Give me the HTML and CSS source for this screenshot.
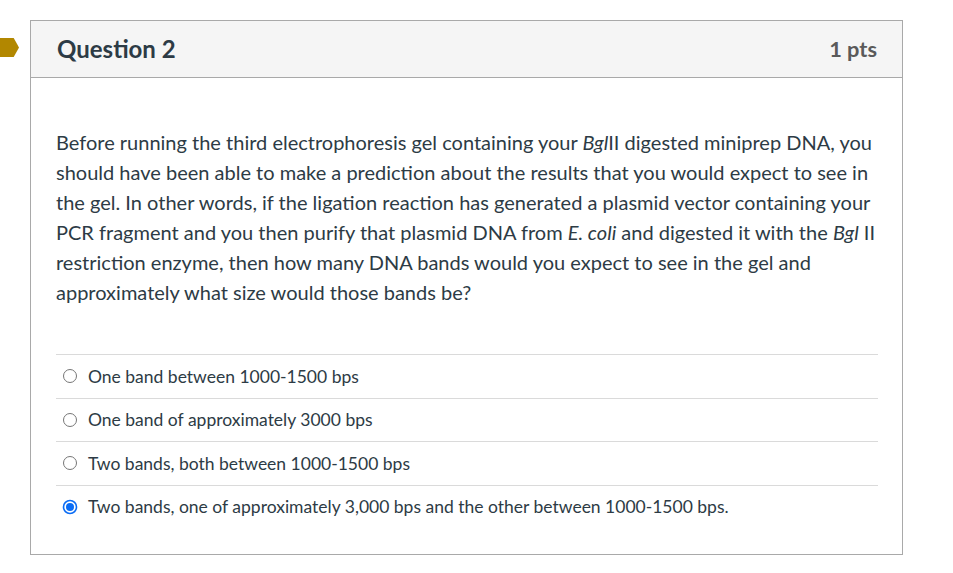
FILE: index.html
```html
<!DOCTYPE html>
<html lang="en">

<head>
    <meta charset="UTF-8">
    <meta name="viewport" content="width=device-width, initial-scale=1.0">
    <title>Question 2</title>
    <link rel="stylesheet" href="styles.css">
</head>

<body>

    <div class="page">
        <div class="flag"></div>

        <div class="question">
            <div class="header">
                <h2 class="title">Question 2</h2>
                <span class="points">1 pts</span>
            </div>

            <div class="content">
                <p class="text">
                    Before running the third electrophoresis gel containing your <em>Bgl</em>II digested miniprep DNA, you
                    should have been able to make a prediction about the results that you would expect to see in
                    the gel. In other words, if the ligation reaction has generated a plasmid vector containing your
                    PCR fragment and you then purify that plasmid DNA from <em>E. coli</em> and digested it with the <em>Bgl</em> II
                    restriction enzyme, then how many DNA bands would you expect to see in the gel and
                    approximately what size would those bands be?
                </p>

                <div class="answers">
                    <label class="answer">
                        <svg class="radio" width="16" height="16" viewBox="0 0 16 16">
                            <circle cx="8" cy="8" r="6.5" fill="#fff" stroke="#767676" stroke-width="1"/>
                        </svg>
                        <span>One band between 1000-1500 bps</span>
                    </label>
                    <label class="answer">
                        <svg class="radio" width="16" height="16" viewBox="0 0 16 16">
                            <circle cx="8" cy="8" r="6.5" fill="#fff" stroke="#767676" stroke-width="1"/>
                        </svg>
                        <span>One band of approximately 3000 bps</span>
                    </label>
                    <label class="answer">
                        <svg class="radio" width="16" height="16" viewBox="0 0 16 16">
                            <circle cx="8" cy="8" r="6.5" fill="#fff" stroke="#767676" stroke-width="1"/>
                        </svg>
                        <span>Two bands, both between 1000-1500 bps</span>
                    </label>
                    <label class="answer">
                        <svg class="radio" width="16" height="16" viewBox="0 0 16 16">
                            <circle cx="8" cy="8" r="6.5" fill="#fff" stroke="#0a6cf5" stroke-width="1.6"/>
                            <circle cx="8" cy="8" r="4" fill="#0a6cf5"/>
                        </svg>
                        <span>Two bands, one of approximately 3,000 bps and the other between 1000-1500 bps.</span>
                    </label>
                </div>
            </div>
        </div>
    </div>

</body>

</html>
```

FILE: styles.css
```css
* {
    box-sizing: border-box;
    padding: 0;
    margin: 0;
}

body {
    font-family: Lato, 'Open Sans', sans-serif;
    color: #2d3b45;
    background: #fff;
}

.page {
    display: flex;
    align-items: flex-start;
    padding-top: 20px;
}

.flag {
    width: 19px;
    height: 19px;
    margin-top: 18px;
    margin-right: 11px;
    background: #b28700;
    clip-path: polygon(0 0, 72% 0, 100% 50%, 72% 100%, 0 100%);
}

.question {
    width: 873px;
    border: 1px solid #a9a9a9;
}

.header {
    display: flex;
    justify-content: space-between;
    align-items: center;
    height: 57px;
    padding: 0 25px 2px 26px;
    background: #f5f5f5;
    border-bottom: 1px solid #a9a9a9;
}

.title {
    font-size: 24px;
    font-weight: 700;
    color: #2d3b45;
}

.points {
    font-size: 21.8px;
    font-weight: 700;
    color: #5a5a5a;
}

.content {
    padding: 49px 24px 26px 25px;
}

.text {
    font-size: 20px;
    line-height: 30px;
}

.answers {
    margin-top: 47px;
}

.answer {
    display: flex;
    align-items: center;
    height: 43.5px;
    border-top: 1px solid #dadada;
    font-size: 17.5px;
}

.radio {
    margin-left: 6px;
    margin-right: 10px;
}
```
